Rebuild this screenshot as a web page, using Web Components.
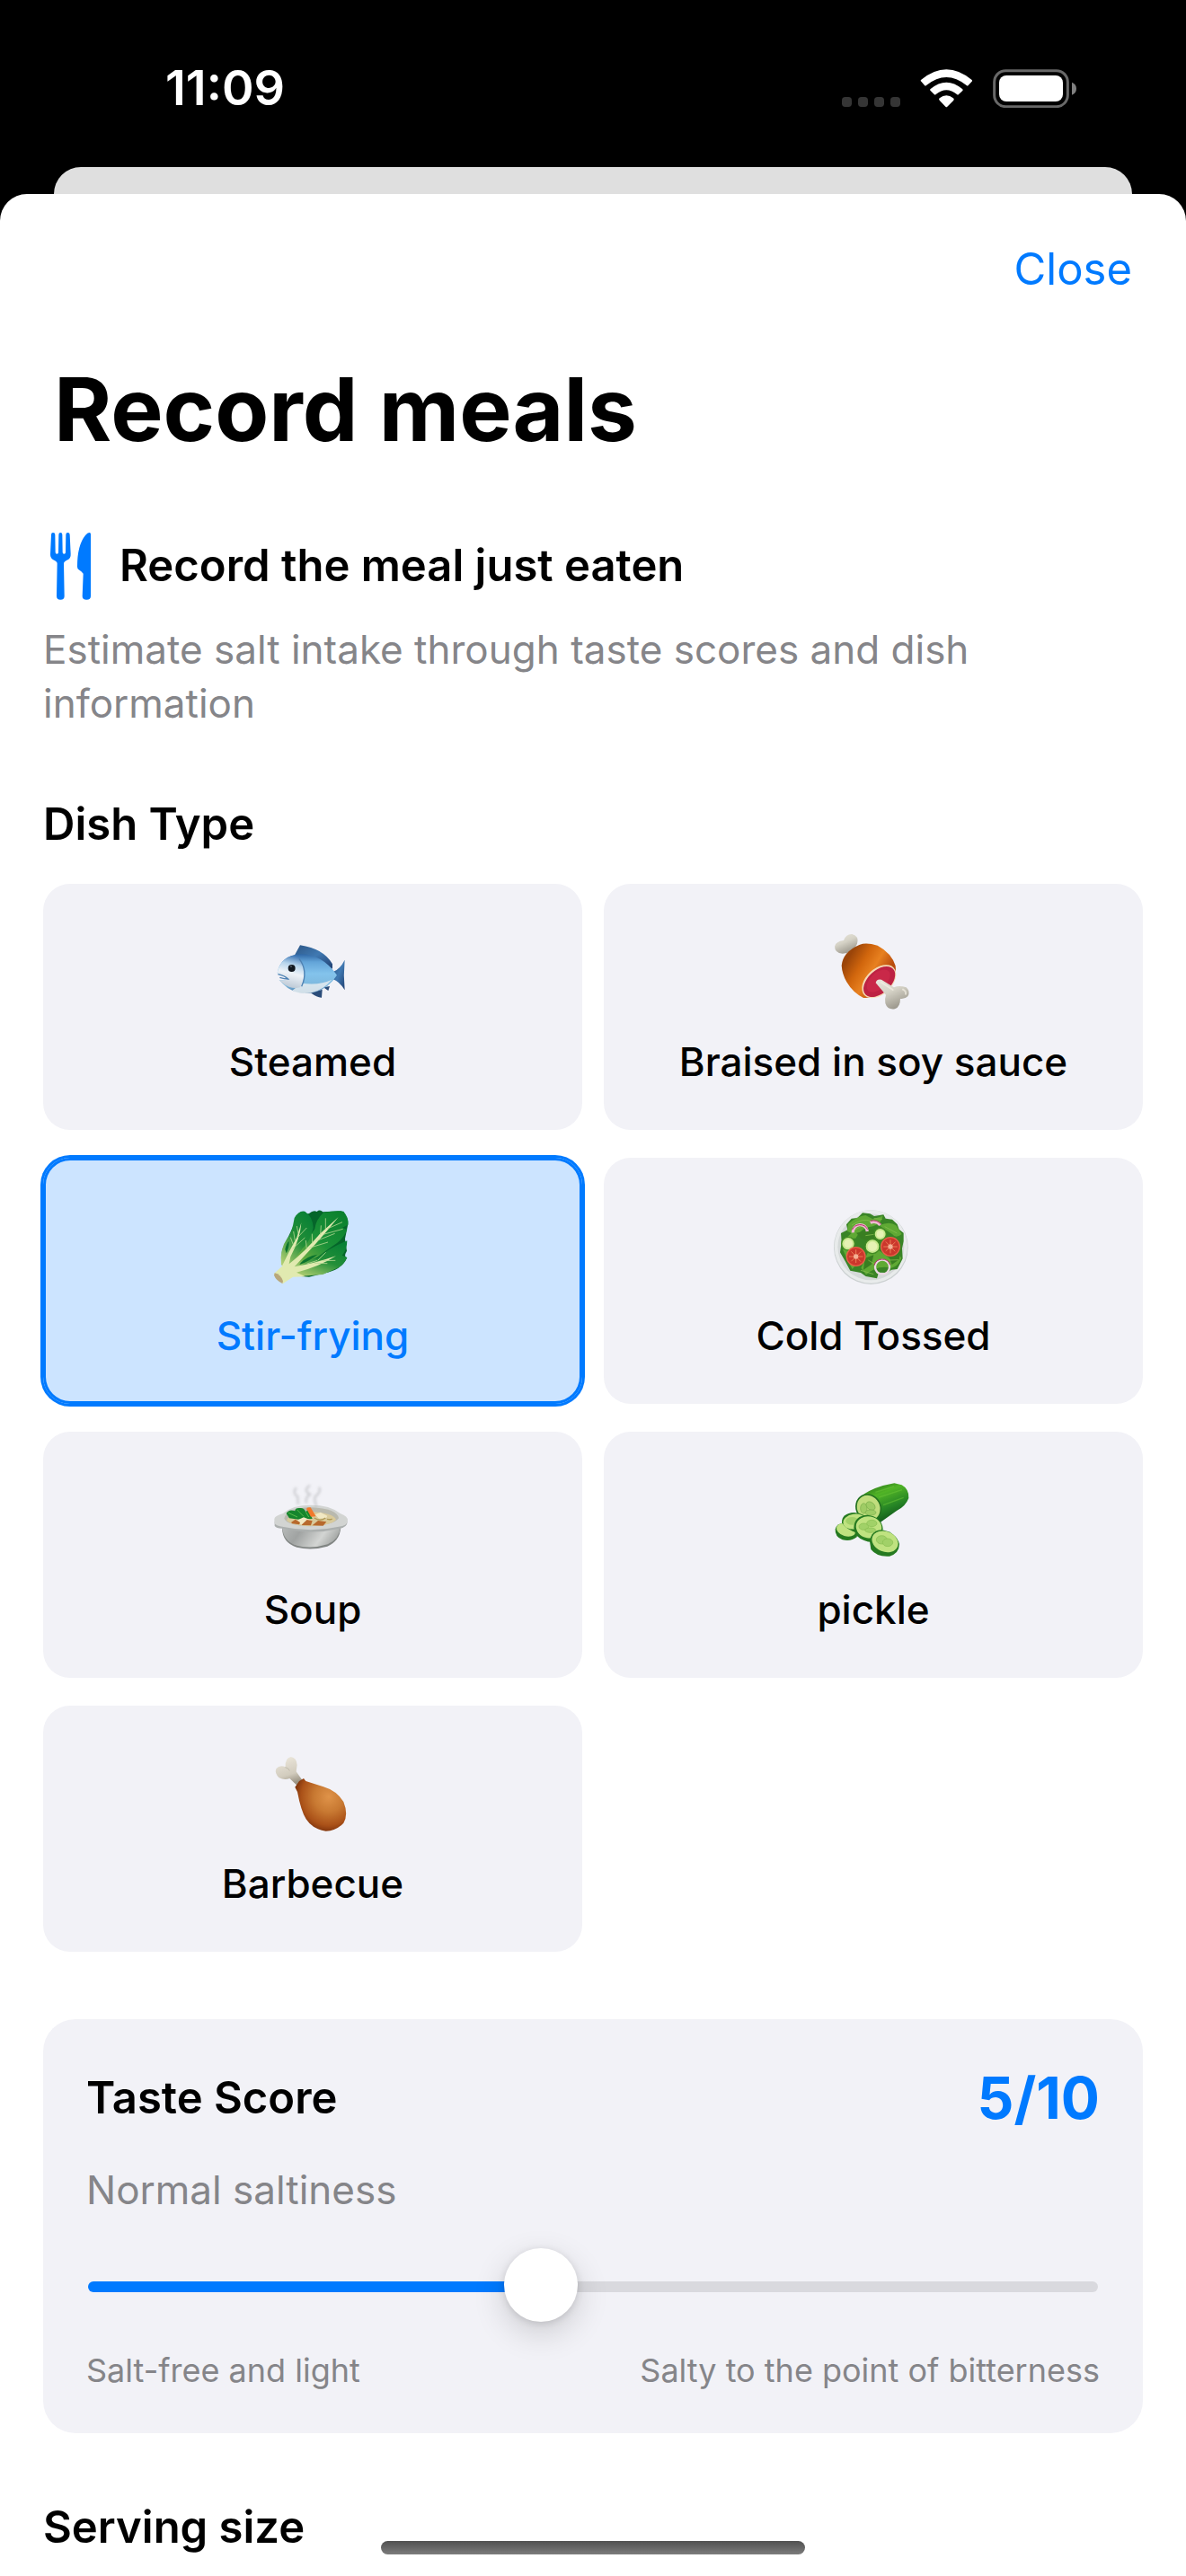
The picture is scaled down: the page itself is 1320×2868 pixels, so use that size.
<!DOCTYPE html>
<html lang="en">
<head>
<meta charset="utf-8">
<meta name="viewport" content="width=device-width">
<title>Record meals</title>
<style>
 html {
  background: #000;
 }
 body {
  margin: 0;
  font-family: Inter, "Liberation Sans", sans-serif;
  --azul: #007aff;
  --gris: #858589;
  --tarjeta: #f2f2f7;
  color: #000;
 }
</style>
</head>
<body>
<meal-app>
 <status-bar>11:09</status-bar>
 <meal-sheet>
  <span slot="close">Close</span>
  <span slot="title">Record meals</span>
  <sheet-intro>
   <span slot="title">Record the meal just eaten</span>
   Estimate salt intake through taste scores and dish information
  </sheet-intro>
  <sheet-section>
   <span slot="title">Dish Type</span>
   <dish-grid>
    <dish-card icon="fish">Steamed</dish-card>
    <dish-card icon="meat">Braised in soy sauce</dish-card>
    <dish-card icon="leaf" selected>Stir-frying</dish-card>
    <dish-card icon="salad">Cold Tossed</dish-card>
    <dish-card icon="soup">Soup</dish-card>
    <dish-card icon="cucumber">pickle</dish-card>
    <dish-card icon="drumstick">Barbecue</dish-card>
   </dish-grid>
  </sheet-section>
  <taste-score>
   <span slot="title">Taste Score</span>
   <span slot="level">Normal saltiness</span>
   <span slot="low">Salt-free and light</span>
   <span slot="high">Salty to the point of bitterness</span>
  </taste-score>
  <sheet-section>
   <span slot="title">Serving size</span>
  </sheet-section>
 </meal-sheet>
</meal-app>

<script>
const DISH_ICONS = {
 fish: /* html */
  `<svg viewBox="-6 0 420 360" aria-hidden="true">
    <defs>
     <linearGradient id="cuerpo" x1="0" y1="0" x2="0" y2="1">
      <stop offset="0" stop-color="#2f67a6"/><stop offset=".2" stop-color="#63a4d8"/>
      <stop offset=".5" stop-color="#83c3ec"/><stop offset=".8" stop-color="#7db8dd"/>
      <stop offset="1" stop-color="#4a7aa8"/>
     </linearGradient>
     <linearGradient id="cara" x1=".6" y1="0" x2=".4" y2="1">
      <stop offset="0" stop-color="#3b74b4"/><stop offset=".28" stop-color="#b5d4ec"/>
      <stop offset=".55" stop-color="#eef3f8"/><stop offset="1" stop-color="#b9c6d3"/>
     </linearGradient>
     <linearGradient id="aleta" x1="0" y1="0" x2="1" y2="1">
      <stop offset="0" stop-color="#2c5686"/><stop offset=".5" stop-color="#4079b2"/>
      <stop offset="1" stop-color="#203f70"/>
     </linearGradient>
    </defs>
    <path fill="url(#aleta)" d="M144 130 162 97Q240 108 270 160L270 176Q210 140 144 130Z"/>
    <path fill="url(#aleta)" d="M272 186Q295 178 311 146Q306 196 311 247Q294 218 270 210Z"/>
    <path fill="#2b4c79" d="M197 256Q220 273 234 272L236 245ZM240 238 256 249 261 234Z"/>
    <path fill="url(#cuerpo)" d="M86 190Q96 132 160 127Q236 126 285 197Q258 240 212 254Q145 268 104 226L92 213Q110 216 121 212Q108 200 86 190Z"/>
    <path fill="#dfe9ee" d="M168 224Q226 232 268 212Q240 246 200 256Q158 262 136 248Z" opacity=".9"/>
    <path fill="url(#cara)" d="M86 190Q96 137 150 130Q177 152 176 194Q174 220 162 238Q132 246 104 224L92 213Q112 216 123 211Q110 200 86 190Z"/>
    <path fill="none" stroke="#4d81b2" stroke-width="4" d="M159 142Q190 184 167 235M88 194Q111 199 122 210Q110 210 94 205"/>
    <circle cx="134" cy="174" r="12" fill="#111820"/><circle cx="132" cy="168" r="3" fill="#4f5964"/>
   </svg>`,
 meat: /* html */
  `<svg viewBox="6 0 420 360" aria-hidden="true">
    <defs>
     <linearGradient id="carne" x1=".1" y1=".3" x2=".75" y2=".7">
      <stop offset="0" stop-color="#9b4509"/><stop offset=".35" stop-color="#d1660d"/>
      <stop offset=".65" stop-color="#e88120"/><stop offset="1" stop-color="#b84c0d"/>
     </linearGradient>
     <linearGradient id="hueso" x1="0" y1="0" x2=".5" y2="1">
      <stop offset="0" stop-color="#ebe8df"/><stop offset=".5" stop-color="#d5d2c6"/>
      <stop offset="1" stop-color="#9d998e"/>
     </linearGradient>
    </defs>
    <path fill="url(#hueso)" d="M152 110 162 92Q169 66 145 60Q125 59 117 81Q91 84 87 101Q87 123 113 125L128 123Z"/>
    <path fill="url(#carne)" d="M110 165Q114 119 171 95Q193 87 230 98Q277 123 290 166Q296 210 254 246Q220 276 183 273Q148 256 127 220Q112 194 110 165Z"/>
    <ellipse cx="235" cy="218" rx="67" ry="43" transform="rotate(-43 235 218)" fill="#f5d9b5"/>
    <ellipse cx="236" cy="219" rx="63" ry="38" transform="rotate(-43 236 219)" fill="#bd2243"/>
    <ellipse cx="233" cy="216" rx="47" ry="27" transform="rotate(-43 233 216)" fill="#d42d4d" opacity=".55"/>
    <path fill="url(#hueso)" d="M224 223Q226 209 243 212L285 238Q302 230 326 238Q341 253 331 268Q321 278 306 276Q306 304 288 310Q263 314 256 291Q253 277 258 263Z"/>
    <path fill="none" stroke="#f2eee3" stroke-width="6" stroke-linecap="round" d="M242 221 281 246M315 245Q326 251 324 260" opacity=".7"/>
   </svg>`,
 leaf: /* html */
  `<svg viewBox="-6 -18 420 360" aria-hidden="true">
    <defs>
     <linearGradient id="hoja" x1="1" y1="0" x2="0" y2="1">
      <stop offset="0" stop-color="#087e2c"/><stop offset=".45" stop-color="#1b9138"/>
      <stop offset=".72" stop-color="#65ac42"/><stop offset="1" stop-color="#e9efb8"/>
     </linearGradient>
     <linearGradient id="hojab" x1=".8" y1="0" x2=".2" y2="1">
      <stop offset="0" stop-color="#078035"/><stop offset=".5" stop-color="#238f38"/>
      <stop offset="1" stop-color="#b3cf73"/>
     </linearGradient>
    </defs>
    <path fill="#05652a" d="M155 68 192 60Q206 48 218 54Q228 45 238 55L300 52Q322 70 322 95L312 145 318 185Q306 205 319 208Q300 251 240 260L192 272 120 266 104 216Q94 190 113 158L135 112Z"/>
    <path fill="url(#hojab)" d="M146 241Q163 215 220 210 250 180 319 151Q319 182 302 200L319 207Q304 238 280 245L238 264 170 269 124 264Z"/>
    <path fill="url(#hoja)" d="M102 247Q134 211 164 184Q184 148 211 112Q214 82 240 57Q277 50 307 53Q326 75 322 98L303 107 319 115Q307 142 286 158Q248 184 220 206Q176 220 129 261Z"/>
    <path fill="url(#hojab)" d="M99 232Q93 179 119 143Q134 130 143 75Q158 48 178 53Q205 71 206 108Q197 153 169 178Q145 212 120 246Z"/>
    <path fill="#0c742e" d="M112 180Q117 157 125 153Q126 176 116 193ZM164 225Q184 203 220 197Q195 219 160 231Z"/>
    <path fill="#e1eab0" d="M75 261 101 237Q125 186 151 140L166 91Q163 142 130 205L125 229Q181 184 228 128L290 72Q247 125 210 166L143 238Q207 228 282 202Q224 239 150 257L180 271 138 272 104 295Z"/>
    <g fill="none" stroke="#b7d893" stroke-width="3" opacity=".8">
     <path d="M139 164 130 140M145 151 140 120M156 127 151 102M137 178 178 141M153 141 184 108M184 180 181 150M203 160 202 128M230 132 232 100M247 112 247 76M193 175 255 156M218 151 278 127M239 130 305 112M253 111 303 89M185 228 220 217M222 216 248 190M210 226 253 227M236 218 280 217"/>
    </g>
    <path fill="#b8a77b" d="M77 259Q97 263 105 286L103 294Q82 284 75 267Z"/>
   </svg>`,
 salad: /* html */
  `<svg viewBox="6 -18 420 360" aria-hidden="true">
    <circle cx="208" cy="173" r="124" fill="#cbd0d1"/>
    <circle cx="208" cy="171" r="122" fill="#e8ebeb"/>
    <circle cx="208" cy="172" r="111" fill="#d5dad9"/>
    <path fill="#398426" d="M126 97 143 77 163 75 180 58 205 61 219 69 250 64 257 77 279 80 296 96 302 113 317 125 317 153 312 177 314 211 296 246 277 248 260 258 234 257 228 277 191 270 174 258 139 251 123 221 105 190 110 157 108 126 130 115Z"/>
    <path fill="#5fa934" d="M132 95Q161 70 190 66L214 79 248 68Q244 93 215 103Q173 107 157 143L124 143 143 126 129 119ZM235 100Q271 84 292 100L311 129Q291 145 279 129ZM114 180 151 177 176 210 146 246Q131 221 114 180ZM197 191 234 183 274 212 298 193 310 209Q299 237 277 242Q228 230 192 265L175 242Z"/>
    <path fill="#397e21" d="M159 125 213 113 241 135 212 155 176 144ZM188 209 217 199 210 230 183 248ZM268 204 309 177 302 214 278 231Z"/>
    <g fill="none" stroke="#87bd4d" stroke-width="3" opacity=".75">
     <path d="M144 99Q181 74 209 86M148 118 190 96M254 104 295 126M128 193 153 235M199 216 226 232M267 216 300 215M190 134 231 128M218 77 245 79M174 250 217 263"/>
    </g>
    <path fill="none" stroke="#edbad0" stroke-width="10" d="M148 124A24 24 0 0 1 196 120M206 91A27 27 0 0 1 239 99"/>
    <path fill="none" stroke="#b82b67" stroke-width="3" d="M145 115A29 29 0 0 1 197 113M206 85Q228 80 241 95"/>
    <g fill="#cbe991" stroke="#438c24" stroke-width="4">
     <circle cx="239" cy="129" r="20"/><circle cx="132" cy="161" r="22"/><circle cx="213" cy="170" r="24"/>
    </g>
    <g fill="#e6f2b4"><circle cx="239" cy="129" r="12"/><circle cx="132" cy="161" r="14"/><circle cx="213" cy="170" r="16"/></g>
    <g fill="#cb372c" stroke="#e95f48" stroke-width="4"><circle cx="158" cy="204" r="31"/><circle cx="273" cy="171" r="31"/></g>
    <g stroke="#ea7f55" stroke-width="3" stroke-linecap="round">
     <path d="M158 182V224M136 204H180M143 188 173 220M174 188 143 219M273 149V192M251 171H295M258 155 288 186M289 156 258 185"/>
    </g>
    <g fill="#f4b095"><circle cx="158" cy="204" r="8"/><circle cx="273" cy="171" r="8"/></g>
    <circle cx="246" cy="239" r="24" fill="none" stroke="#ead9e2" stroke-width="7"/>
    <path d="M219 233A28 28 0 0 1 272 231" fill="none" stroke="#b62965" stroke-width="3"/>
   </svg>`,
 soup: /* html */
  `<svg viewBox="-6 -3 420 360" aria-hidden="true">
    <defs>
     <linearGradient id="olla" x1="0" y1="0" x2="1" y2=".25">
      <stop offset="0" stop-color="#b7bab9"/><stop offset=".35" stop-color="#a0a3a2"/>
      <stop offset=".75" stop-color="#d3d5d3"/><stop offset="1" stop-color="#a6a9a7"/>
     </linearGradient>
     <filter id="vapor" x="-30%" y="-30%" width="160%" height="160%"><feGaussianBlur stdDeviation="4"/></filter>
    </defs>
    <path fill="#818583" d="M102 211Q103 261 151 275Q201 287 253 272Q294 254 298 209Z"/>
    <path fill="url(#olla)" d="M102 207Q106 257 151 269Q200 282 254 265Q292 250 298 205Z"/>
    <path fill="#abafae" d="M77 190 77 203Q82 213 106 212Q199 235 292 213Q320 209 320 188Z"/>
    <path fill="#d2d4d2" d="M76 181Q76 170 105 162Q135 134 198 134Q263 134 296 162Q322 171 321 186Q319 204 291 206Q200 227 107 207Q79 204 76 193Z"/>
    <path fill="#b9b9ae" d="M109 179Q116 144 198 142Q285 145 291 178Q275 201 198 205Q119 202 109 179Z"/>
    <path fill="#d9ca9b" d="M117 185Q129 160 202 157Q272 160 282 183Q266 203 195 204Q136 203 117 185Z"/>
    <g fill="none" stroke="#b3b4b8" stroke-width="7" filter="url(#vapor)" opacity=".6">
     <path d="M149 76Q135 94 154 106L155 132M195 68Q170 85 195 98Q178 109 183 128M225 74Q233 87 218 101Q204 105 217 140"/>
    </g>
    <path fill="#16852d" d="M116 162Q125 146 145 154Q145 142 163 144Q175 143 181 157L190 147 203 180 158 182 126 178Z"/>
    <path stroke="#59bd4b" stroke-width="3" fill="none" d="M123 160 153 174M151 149 174 172M181 157 191 174"/>
    <path fill="#f1782b" d="M184 148Q182 140 197 142L215 172 198 173Z"/>
    <path fill="#f1e8c3" d="M212 166 230 158 253 170 249 178 225 179ZM154 184 174 175 195 183 188 197 166 202Z"/>
    <path fill="#b7692d" d="M132 192 146 182 162 192 159 199 136 196ZM166 201 185 183 203 187 198 202ZM203 202 222 186 250 190 239 203Z"/>
    <path fill="none" stroke="#af9957" stroke-width="4" d="M209 177Q230 190 247 177M252 181Q264 184 269 180"/>
   </svg>`,
 cucumber: /* html */
  `<svg viewBox="6 -3 420 360" aria-hidden="true">
    <defs>
     <linearGradient id="pepino" x1=".2" y1="0" x2=".7" y2="1">
      <stop offset="0" stop-color="#246e16"/><stop offset=".3" stop-color="#51b426"/>
      <stop offset=".65" stop-color="#268525"/><stop offset="1" stop-color="#0c4b18"/>
     </linearGradient>
    </defs>
    <path fill="url(#pepino)" d="M172 107Q199 84 248 69L286 61 311 67Q336 81 334 111Q324 138 294 153L240 191Q195 180 172 107Z"/>
    <path fill="none" stroke="#67c237" stroke-width="4" d="M223 91 285 72M235 108 312 83M249 134 317 109" opacity=".55"/>
    <ellipse cx="200" cy="143" rx="40" ry="45" transform="rotate(-29 200 143)" fill="#c0dd7d" stroke="#237220" stroke-width="5"/>
    <g fill="#9fcc65" stroke="#78ae4b" stroke-width="2">
     <ellipse cx="184" cy="145" rx="11" ry="17"/><ellipse cx="207" cy="137" rx="17" ry="12" transform="rotate(40 207 137)"/><ellipse cx="207" cy="159" rx="18" ry="9"/>
    </g>
    <g fill="#257a20">
     <path d="M89 215Q92 196 116 194L164 222 161 241Q141 257 113 250Q87 239 89 215Z"/>
    </g>
    <ellipse cx="125" cy="217" rx="33" ry="21" transform="rotate(17 125 217)" fill="#bfe280"/>
    <path fill="#257a20" d="M111 193Q110 161 152 159 188 160 196 187L166 228Q126 218 111 193Z"/>
    <ellipse cx="153" cy="189" rx="38" ry="25" transform="rotate(-9 153 189)" fill="#bfe280"/>
    <ellipse cx="145" cy="187" rx="21" ry="13" fill="#a1d168"/>
    <path fill="#257a20" d="M151 210Q152 169 197 167Q245 174 248 213L240 245Q219 266 185 252Q153 240 151 210Z"/>
    <ellipse cx="201" cy="208" rx="43" ry="36" transform="rotate(10 201 208)" fill="#bfe280"/>
    <path fill="#257a20" d="M204 256Q209 217 246 217Q292 226 303 264Q302 296 270 305Q228 308 208 282Z"/>
    <ellipse cx="255" cy="256" rx="45" ry="34" transform="rotate(22 255 256)" fill="#bfe280"/>
    <g fill="#a1d168" stroke="#86bc50" stroke-width="2">
     <ellipse cx="184" cy="206" rx="16" ry="11"/><ellipse cx="211" cy="195" rx="17" ry="11"/><ellipse cx="206" cy="218" rx="18" ry="8"/>
     <ellipse cx="244" cy="250" rx="18" ry="14"/><ellipse cx="264" cy="259" rx="17" ry="13"/>
    </g>
   </svg>`,
 drumstick: /* html */
  `<svg viewBox="-6 -3 420 360" aria-hidden="true">
    <defs>
     <radialGradient id="muslo" cx=".66" cy=".35" r=".72">
      <stop offset="0" stop-color="#df9349"/><stop offset=".4" stop-color="#c87932"/>
      <stop offset=".75" stop-color="#aa5118"/><stop offset="1" stop-color="#6e2908"/>
     </radialGradient>
     <linearGradient id="hueso" x1="0" y1="0" x2=".3" y2="1">
      <stop offset="0" stop-color="#f0ebe0"/><stop offset=".7" stop-color="#d1cbbd"/>
      <stop offset="1" stop-color="#9c9586"/>
     </linearGradient>
    </defs>
    <path fill="url(#hueso)" d="M113 94Q111 64 131 60Q151 63 152 87L149 109 171 140 153 157 127 132Q110 139 92 130Q76 115 82 100Q94 86 113 94Z"/>
    <path fill="none" stroke="#b7b0a1" stroke-width="3" d="M112 95Q125 97 127 107" opacity=".7"/>
    <path fill="url(#muslo)" d="M145 161 159 141 174 132 181 141 240 160Q284 173 307 210Q324 252 307 281Q283 307 248 308Q204 302 182 268Q165 241 153 177Z"/>
   </svg>`
}

/**
 * @param {HTMLElement} elemento
 * @param {string} html
 */
function creaShadow(elemento, html) {
 const shadowRoot = elemento.attachShadow({ mode: "open" })
 shadowRoot.innerHTML = html
 return shadowRoot
}

class MealApp extends HTMLElement {
 constructor() {
  super()
  creaShadow(this, /* html */
   `<style>
     :host {
      display: flex;
      flex-direction: column;
      box-sizing: border-box;
      height: 100vh;
      overflow: hidden;
      background-color: #000;
     }
     /* Floats over whatever scrolls below it. */
     .home {
      position: fixed;
      bottom: 24px;
      left: 50%;
      width: 472px;
      height: 15px;
      margin-left: -236px;
      border-radius: 8px;
      background: linear-gradient(#505050, #7c7c7c);
     }
    </style>
    <slot></slot>
    <div class="home"></div>`)
 }
}
customElements.define("meal-app", MealApp)

class StatusBar extends HTMLElement {
 constructor() {
  super()
  creaShadow(this, /* html */
   `<style>
     :host {
      display: flex;
      flex-direction: column;
      color: #fff;
      flex: none;
     }
     .bar {
      display: flex;
      justify-content: space-between;
      align-items: center;
      height: 60px;
      padding: 68px 120px 58px 184px;
      font-size: 54px;
      line-height: 60px;
      font-weight: 600;
     }
     .back {
      height: 30px;
      margin: 0 60px;
      border-radius: 30px 30px 0 0;
      background-color: #dfdfdf;
     }
    </style>
    <div class="bar">
     <slot></slot>
     <svg width="264" height="44" viewBox="18 42 792 132" aria-hidden="true">
      <g fill="#353535">
       <rect x="21" y="138" width="33" height="33" rx="11"/>
       <rect x="75" y="138" width="33" height="33" rx="11"/>
       <rect x="129" y="138" width="33" height="33" rx="11"/>
       <rect x="183" y="138" width="33" height="33" rx="11"/>
      </g>
      <g fill="#fff">
       <path d="M286 80Q370 11 454 80Q458 83 455 86L443 99Q440 102 437 99Q370 45 303 99Q300 102 297 99L286 86Q282 83 286 80Z"/>
       <path d="M317 111Q370 67 423 111Q427 114 424 117L411 129Q408 132 405 129Q370 101 335 129Q332 132 329 129L317 117Q313 114 317 111Z"/>
       <path d="M347 142Q370 123 393 142Q397 145 394 149L373 170Q370 173 367 170L347 149Q343 145 347 142Z"/>
      </g>
      <rect x="530" y="50" width="245" height="120" rx="38" fill="none" stroke="#686868" stroke-width="9"/>
      <rect x="546" y="66" width="213" height="87" rx="24" fill="#fff"/>
      <path fill="#808080" d="M789 89Q804 95 804 110Q804 125 789 131Z"/>
     </svg>
    </div>
    <div class="back"></div>`)
 }
}
customElements.define("status-bar", StatusBar)

class MealSheet extends HTMLElement {
 constructor() {
  super()
  creaShadow(this, /* html */
   `<style>
     :host {
      display: flex;
      flex-direction: column;
      flex: 1 0 auto;
      box-sizing: border-box;
      padding: 54px 48px 0;
      border-radius: 30px 30px 0 0;
      background-color: #fff;
     }
     nav {
      display: flex;
      justify-content: flex-end;
      padding: 0 12px;
     }
     button {
      border: none;
      padding: 0;
      background: none;
      color: var(--azul);
      font-family: inherit;
      font-size: 49px;
      line-height: 60px;
     }
     h1 {
      margin: 66px 12px 74px;
      font-size: 98px;
      line-height: 120px;
      font-weight: 700;
     }
     main {
      display: flex;
      flex-direction: column;
      gap: 75px;
     }
    </style>
    <nav><button type="button"><slot name="close"></slot></button></nav>
    <h1><slot name="title"></slot></h1>
    <main><slot></slot></main>`)
 }
}
customElements.define("meal-sheet", MealSheet)

class SheetIntro extends HTMLElement {
 constructor() {
  super()
  creaShadow(this, /* html */
   `<style>
     :host {
      display: block;
     }
     header {
      display: flex;
      align-items: center;
      gap: 15px;
      height: 80px;
     }
     h2 {
      margin: 0;
      font-size: 49px;
      line-height: 60px;
      font-weight: 600;
     }
     p {
      margin: 23px 0 0;
      color: var(--gris);
      font-size: 44px;
      line-height: 60px;
     }
    </style>
    <header>
     <svg width="70" height="80" viewBox="54 60 210 240" fill="#007aff" aria-hidden="true">
      <path d="M81 76Q81 69 87 69Q94 69 94 76L95 135Q95 140 100 140Q105 140 105 135L106 76Q106 69 112 69Q118 69 118 76L119 135Q119 140 124 140Q129 140 129 135L130 76Q130 69 136 69Q143 69 143 76L146 140Q147 154 136 160Q123 166 123 172L125 281Q125 293 112 293Q99 293 99 281L101 172Q101 166 88 160Q78 154 78 142Z"/>
      <path d="M213 74V281Q213 293 199 293Q185 293 185 281L188 206Q182 198 173 193Q168 190 168 182Q168 111 195 78Q203 68 209 69Q213 70 213 74Z"/>
     </svg>
     <h2><slot name="title"></slot></h2>
    </header>
    <p><slot></slot></p>`)
 }
}
customElements.define("sheet-intro", SheetIntro)

class SheetSection extends HTMLElement {
 constructor() {
  super()
  creaShadow(this, /* html */
   `<style>
     :host {
      display: flex;
      flex-direction: column;
      gap: 36px;
     }
     h2 {
      margin: 0;
      font-size: 49px;
      line-height: 60px;
      font-weight: 600;
     }
    </style>
    <h2><slot name="title"></slot></h2>
    <slot></slot>`)
 }
}
customElements.define("sheet-section", SheetSection)

class DishGrid extends HTMLElement {
 constructor() {
  super()
  creaShadow(this, /* html */
   `<style>
     :host {
      display: grid;
      grid-template-columns: 1fr 1fr;
      gap: 31px 24px;
     }
    </style>
    <slot></slot>`)
  this.addEventListener("click", evt => {
   const elegida = evt.target.closest("dish-card")
   if (!elegida) return
   for (const tarjeta of this.querySelectorAll("dish-card")) {
    tarjeta.toggleAttribute("selected", tarjeta === elegida)
   }
  })
 }
}
customElements.define("dish-grid", DishGrid)

class DishCard extends HTMLElement {
 static get observedAttributes() {
  return ["selected"]
 }
 constructor() {
  super()
  const icono = DISH_ICONS[this.getAttribute("icon")] || ""
  const shadowRoot = creaShadow(this, /* html */
   `<style>
     :host {
      display: block;
     }
     button {
      display: flex;
      flex-direction: column;
      align-items: center;
      gap: 12px;
      width: 100%;
      padding: 36px 24px 46px;
      border: none;
      border-radius: 30px;
      background-color: var(--tarjeta);
      color: #000;
      font-family: inherit;
      font-size: 44px;
      line-height: 60px;
      font-weight: 500;
     }
     svg {
      width: 140px;
      height: 120px;
     }
     button[aria-pressed=true] {
      background-color: #cce4ff;
      color: var(--azul);
      box-shadow: 0 0 0 3px var(--azul), inset 0 0 0 3px var(--azul);
     }
    </style>
    <button type="button">${icono}<span><slot></slot></span></button>`)
  this.button = shadowRoot.querySelector("button")
  this.muestra()
 }
 attributeChangedCallback() {
  this.muestra()
 }
 muestra() {
  this.button.setAttribute("aria-pressed", String(this.hasAttribute("selected")))
 }
}
customElements.define("dish-card", DishCard)

class TasteScore extends HTMLElement {
 constructor() {
  super()
  const shadowRoot = creaShadow(this, /* html */
   `<style>
     :host {
      display: block;
      padding: 48px 48px 46px;
      border-radius: 36px;
      background-color: var(--tarjeta);
     }
     header, footer {
      display: flex;
      justify-content: space-between;
      align-items: center;
     }
     label {
      font-size: 49px;
      line-height: 60px;
      font-weight: 600;
     }
     output {
      color: var(--azul);
      font-size: 64px;
      line-height: 80px;
      font-weight: 700;
     }
     p {
      margin: 32px 0;
      color: var(--gris);
      font-size: 44px;
      line-height: 60px;
     }
     .slider {
      display: flex;
      padding: 0 2px;
     }
     input {
      -webkit-appearance: none;
      appearance: none;
      flex: 1;
      min-width: 0;
      height: 92px;
      margin: 0;
      background: none;
     }
     input::-webkit-slider-runnable-track {
      height: 12px;
      border-radius: 6px;
      background: linear-gradient(to right, var(--azul) var(--avance), #d9d9de var(--avance));
     }
     input::-webkit-slider-thumb {
      -webkit-appearance: none;
      width: 82px;
      height: 82px;
      margin-top: -37px;
      border-radius: 50%;
      background-color: #fff;
      box-shadow: 0 12px 36px rgba(0, 0, 0, .16), 0 2px 8px rgba(0, 0, 0, .12);
     }
     footer {
      margin-top: 23px;
      color: var(--gris);
      font-size: 36px;
      line-height: 48px;
     }
    </style>
    <header>
     <label for="score"><slot name="title"></slot></label>
     <output for="score"></output>
    </header>
    <p><slot name="level"></slot></p>
    <div class="slider"><input id="score" type="range" min="1" max="10" value="5"></div>
    <footer>
     <slot name="low"></slot>
     <slot name="high"></slot>
    </footer>`)
  this.input = shadowRoot.querySelector("input")
  this.output = shadowRoot.querySelector("output")
  this.input.addEventListener("input", () => this.muestra())
  this.muestra()
 }
 muestra() {
  const valor = Number(this.input.value)
  this.output.textContent = `${valor}/10`
  this.input.style.setProperty("--avance", `${(valor - 1) / 9 * 100}%`)
 }
}
customElements.define("taste-score", TasteScore)
</script>
</body>
</html>
